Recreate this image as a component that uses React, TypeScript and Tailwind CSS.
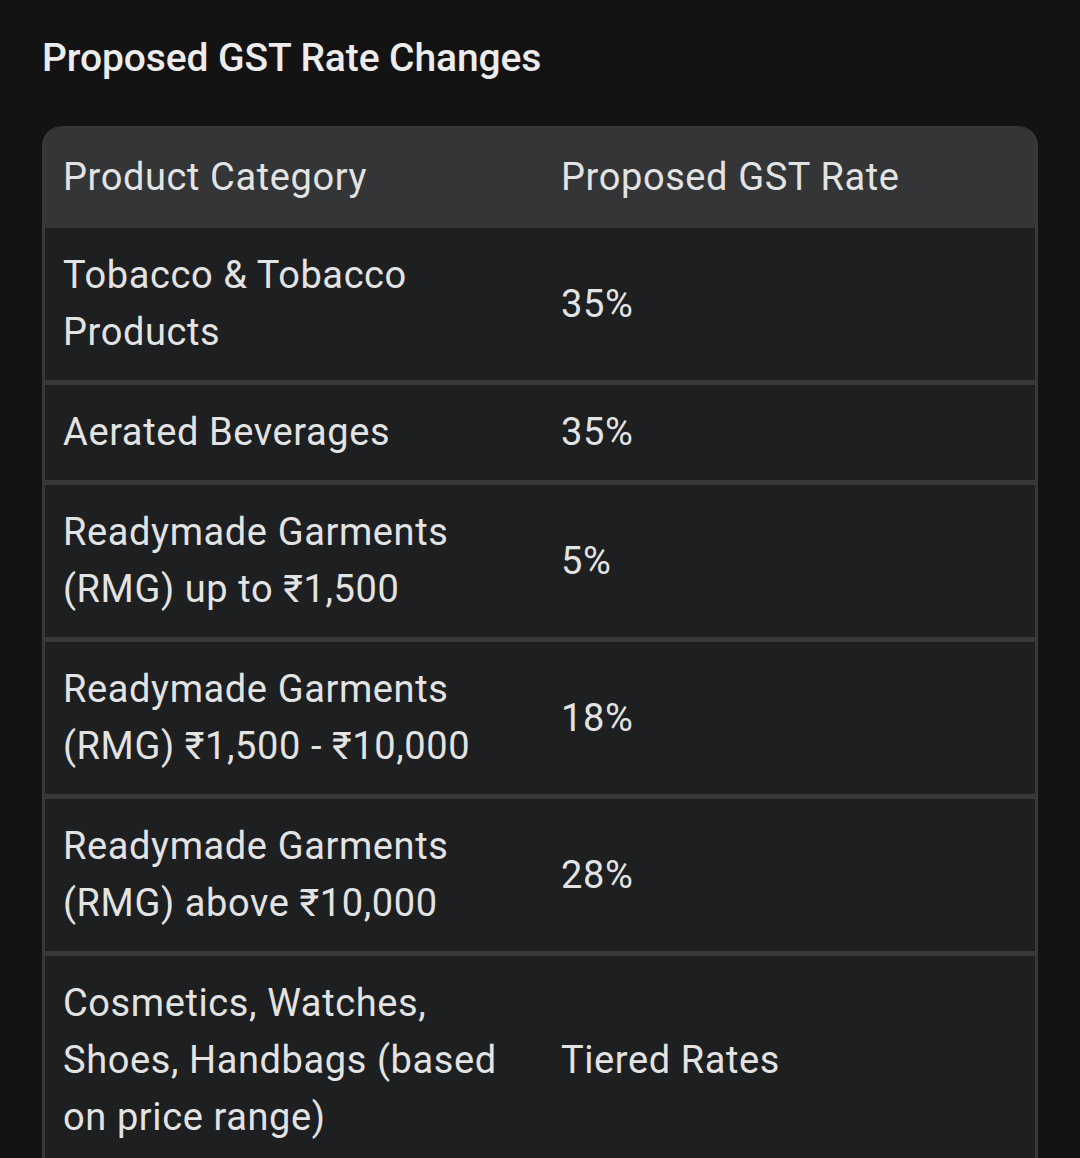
const rows: { category: string; rate: string }[] = [
  { category: 'Tobacco & Tobacco Products', rate: '35%' },
  { category: 'Aerated Beverages', rate: '35%' },
  { category: 'Readymade Garments (RMG) up to ₹1,500', rate: '5%' },
  { category: 'Readymade Garments (RMG) ₹1,500 - ₹10,000', rate: '18%' },
  { category: 'Readymade Garments (RMG) above ₹10,000', rate: '28%' },
  { category: 'Cosmetics, Watches, Shoes, Handbags (based on price range)', rate: 'Tiered Rates' },
];

export default function App() {
  return (
    <div className="min-h-[1158px] bg-[#131314] px-[42px] pt-[30px] font-['Roboto',_'Noto_Sans',_sans-serif] text-[#e3e3e3]">
      <h2 className="mb-[40px] text-[39px] leading-[56px] font-medium tracking-[-0.1px] text-[#ececec]">
        Proposed GST Rate Changes
      </h2>

      <div className="w-[996px] overflow-hidden rounded-t-[20px] border-x-[3px] border-t-[1px] border-[#37383a] bg-[#1e1f20]">
        <table className="w-full border-collapse text-left text-[38px] leading-[57px] tracking-[0.6px]">
          <thead>
            <tr className="bg-[#333537]">
              <th className="h-[101px] w-[497px] pl-[18px] pr-[16px] font-normal">Product Category</th>
              <th className="pl-[19px] pr-[16px] font-normal">Proposed GST Rate</th>
            </tr>
          </thead>
          <tbody>
            {rows.map((row) => (
              <tr key={row.category} className="border-b-[5px] border-[#37383a]">
                <td className="py-[19px] pl-[18px] pr-[20px] align-middle">{row.category}</td>
                <td className="py-[19px] pl-[19px] pr-[16px] align-middle">{row.rate}</td>
              </tr>
            ))}
          </tbody>
        </table>
      </div>
    </div>
  );
}
